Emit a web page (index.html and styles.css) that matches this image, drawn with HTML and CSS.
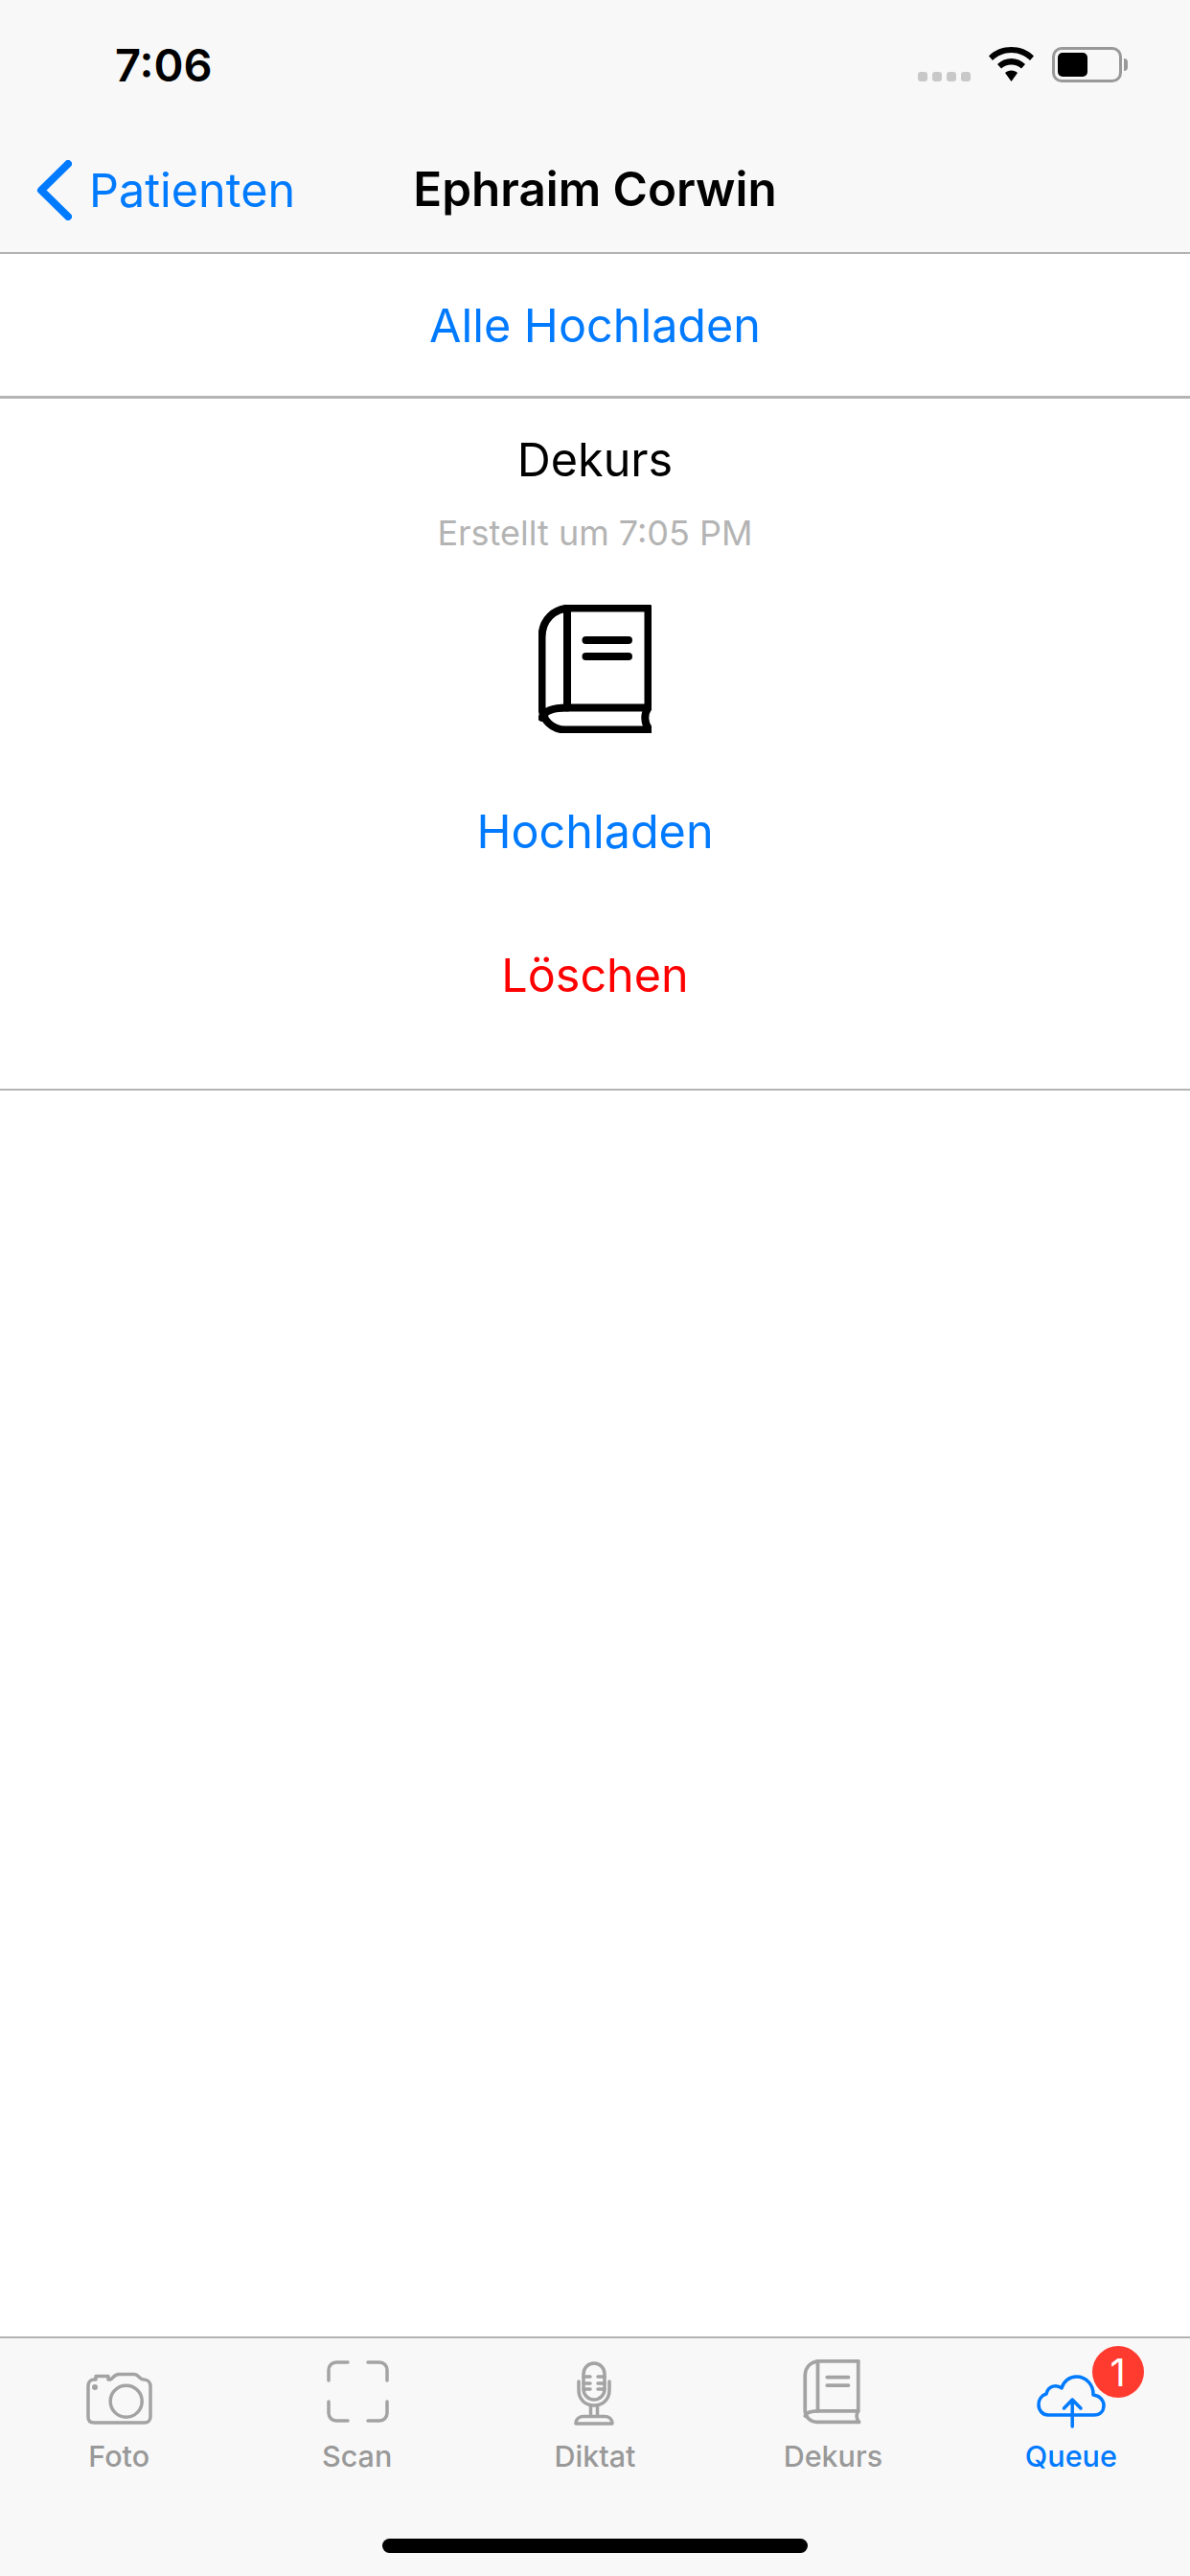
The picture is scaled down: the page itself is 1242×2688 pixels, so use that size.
FILE: index.html
```html
<!DOCTYPE html>
<html lang="de">
<head>
    <meta charset="UTF-8">
    <meta name="viewport" content="width=device-width, initial-scale=1.0">
    <title>Queue</title>
    <link rel="stylesheet" href="styles.css">
</head>
<body>
    <div class="statusbar">
        <span class="time">7:06</span>
        <div class="status-icons">
            <div class="signal"><i></i><i></i><i></i><i></i></div>
            <svg class="wifi" width="47" height="36" viewBox="0 0 47 36">
                <path d="M23.5 0C32 0 41 3 47 9.5L43 14C38 9 31 6 23.5 6C16 6 9 9 4 14L0 9.5C6 3 15 0 23.5 0Z"/>
                <path d="M23.5 12C29 12 34 14 38 18L34 22.5C31 20 27.5 18.5 23.5 18.5C19.5 18.5 16 20 13 22.5L9 18C13 14 18 12 23.5 12Z"/>
                <path d="M23.5 24.5C26 24.5 28.5 25.5 30 27L23.5 36L17 27C18.5 25.5 21 24.5 23.5 24.5Z"/>
            </svg>
            <div class="battery"><div class="battery-level"></div></div>
            <div class="battery-tip"></div>
        </div>
    </div>

    <div class="navbar">
        <div class="back">
            <svg width="37" height="63" viewBox="0 0 37 63">
                <path d="M33 4L5 31.5L33 59"/>
            </svg>
            <span>Patienten</span>
        </div>
        <div class="nav-title">Ephraim Corwin</div>
    </div>

    <main class="content">
        <div class="upload-all">Alle Hochladen</div>
        <section class="queue-item">
            <div class="item-title">Dekurs</div>
            <div class="item-date">Erstellt um 7:05 PM</div>
            <svg class="item-icon book-icon" width="118" height="134" viewBox="0 0 118 134">
                <path d="M114.5 3.5H34C16 3.5 3.5 16 3.5 34V106C3.5 120 14 130.5 28 130.5H116"/>
                <path d="M3.5 118C6 111 16 107.5 30 107.5H114.5V3.5"/>
                <path d="M30 3.5V107.5"/>
                <path d="M114.5 107.5C110 114 110 124 116 130.5"/>
                <path d="M49.5 37H94M49.5 54H94"/>
            </svg>
            <div class="item-action">Hochladen</div>
            <div class="item-action delete">Löschen</div>
        </section>
    </main>

    <nav class="tabbar">
        <div class="tabs">
            <div class="tab">
                <svg class="tab-icon" width="100" height="80" viewBox="0 0 100 80">
                    <path d="M24 27H26V23.5H39V27H41C44 26 45 21.5 50 21.5H66C71 21.5 71 27 76 27C80 27 83 30 83 34V66C83 70 80 72 77 72H24C20 72 18 70 18 66V34C18 30 20 27 24 27Z"/>
                    <circle cx="57.7" cy="49.7" r="16.5"/>
                    <circle class="dot" cx="25" cy="35" r="3"/>
                </svg>
                <span>Foto</span>
            </div>
            <div class="tab">
                <svg class="tab-icon" width="100" height="80" viewBox="0 0 100 80">
                    <path d="M40 9H28A8 8 0 0 0 20 17V28"/>
                    <path d="M61 9H73A8 8 0 0 1 81 17V28"/>
                    <path d="M20 50V62A8 8 0 0 0 28 70H40"/>
                    <path d="M81 50V62A8 8 0 0 1 73 70H61"/>
                </svg>
                <span>Scan</span>
            </div>
            <div class="tab">
                <svg class="tab-icon" width="100" height="80" viewBox="0 0 100 80">
                    <rect x="38" y="10" width="22" height="38" rx="11"/>
                    <path d="M38 24H45M53 24H60M38 31H45M53 31H60M38 37H45M53 37H60"/>
                    <path d="M33 29V38C33 48 40 54 49 54C58 54 65 48 65 38V29"/>
                    <path d="M45.5 54V65M52.5 54V65"/>
                    <path d="M30 73C30 68 34 65.5 38 65.5H60C64 65.5 68 68 68 73Z"/>
                </svg>
                <span>Diktat</span>
            </div>
            <div class="tab">
                <svg class="tab-icon book-icon" width="100" height="80" viewBox="-39 -12 200 160">
                    <path d="M114.5 3.5H34C16 3.5 3.5 16 3.5 34V106C3.5 120 14 130.5 28 130.5H116"/>
                    <path d="M3.5 118C6 111 16 107.5 30 107.5H114.5V3.5"/>
                    <path d="M30 3.5V107.5"/>
                    <path d="M114.5 107.5C110 114 110 124 116 130.5"/>
                    <path d="M49.5 37H94M49.5 54H94"/>
                </svg>
                <span>Dekurs</span>
            </div>
            <div class="tab active">
                <svg class="tab-icon" width="100" height="80" viewBox="0 0 100 80">
                    <path d="M26 64H74C80 64 84 60 84 54C84 48 79 43.5 73 43C73.5 32 65 24 55.5 24C48 24 42 29 40 36C35 32 26 33 24 42C19 43.5 16 48 16 53C16 59 20 64 26 64Z"/>
                    <path d="M51.2 48V76M42.5 57L51.2 48L60 57"/>
                </svg>
                <span>Queue</span>
                <div class="badge">1</div>
            </div>
        </div>
        <div class="home-indicator"></div>
    </nav>
</body>
</html>
```

FILE: styles.css
```css
* { box-sizing: border-box; }
body { margin: 0; width: 1242px; height: 2688px; display: flex; flex-direction: column; background-color: #fff; font-family: Inter, "Liberation Sans", sans-serif; color: #000; overflow: hidden; }

.statusbar { height: 132px; background-color: #f8f8f8; display: flex; justify-content: space-between; padding: 44px 65px 0 120px; }
.time { font-size: 47px; font-weight: 600; line-height: 48px; }
.status-icons { display: flex; align-items: flex-start; padding-top: 5px; }
.signal { display: flex; gap: 5px; margin: 26px 19px 0 0; }
.signal i { width: 10px; height: 10px; border-radius: 3px; background-color: #c8c8c8; }
.wifi { margin-right: 19px; }
.battery { width: 73px; height: 37px; border: 3.5px solid #999; border-radius: 10px; padding: 3px; }
.battery-level { width: 31px; height: 100%; background-color: #000; border-radius: 5px; }
.battery-tip { width: 4px; height: 13px; margin: 12px 0 0 2px; background-color: #999; border-radius: 0 4px 4px 0; }

.navbar { height: 133px; background-color: #f8f8f8; border-bottom: 2px solid #b2b2b2; display: flex; align-items: center; justify-content: center; position: relative; }
.back { position: absolute; left: 38px; top: 35px; display: flex; align-items: center; gap: 18px; color: #007aff; font-size: 48.5px; }
.back svg { fill: none; stroke: #007aff; stroke-width: 8; stroke-linecap: round; stroke-linejoin: round; }
.nav-title { font-size: 49.4px; font-weight: 600; margin-top: -2px; }

.content { flex: 1; display: flex; flex-direction: column; }
.upload-all { height: 151px; border-bottom: 3px solid #b4b4b4; display: flex; align-items: center; justify-content: center; color: #007aff; font-size: 48.5px; }
.queue-item { height: 722px; border-bottom: 2px solid #b4b4b4; display: flex; flex-direction: column; align-items: center; padding-top: 36px; }
.item-title { font-size: 48.5px; line-height: 56px; }
.item-date { font-size: 36px; line-height: 40px; color: #b4b4b4; margin-top: 28px; }
.item-icon { margin-top: 55px; }
.book-icon { fill: none; stroke: #000; stroke-width: 8; stroke-linecap: round; stroke-linejoin: round; }
.item-action { font-size: 48.5px; line-height: 60px; color: #007aff; margin-top: 73px; }
.item-action.delete { color: #f00; margin-top: 90px; }

.tabbar { height: 250px; background-color: #f8f8f8; border-top: 2px solid #b2b2b2; padding-top: 16px; }
.tabs { display: flex; }
.tab { flex: 1; display: flex; flex-direction: column; align-items: center; position: relative; }
.tab span { font-size: 30.5px; line-height: 36px; font-weight: 500; margin-top: 9px; color: #999; }
.tab-icon { fill: none; stroke: #a3a3a3; stroke-width: 3.5; stroke-linecap: round; stroke-linejoin: round; }
.tab-icon.book-icon { stroke-width: 7.5; }
.tab-icon .dot { fill: #a3a3a3; stroke: none; }
.tab.active span { color: #007aff; }
.tab.active .tab-icon { stroke: #007aff; }
.badge { position: absolute; left: 146px; top: -8px; width: 54px; height: 54px; border-radius: 50%; background-color: #ff3b30; color: #fff; font-size: 40px; display: flex; align-items: center; justify-content: center; }
.home-indicator { width: 444px; height: 15px; border-radius: 8px; background-color: #000; margin: 68px auto 0; }
```
